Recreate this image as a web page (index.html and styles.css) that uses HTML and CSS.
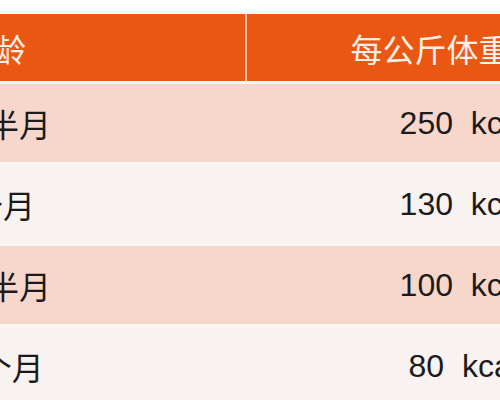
FILE: index.html
```html
<!DOCTYPE html>
<html lang="zh">
<head>
<meta charset="utf-8">
<title>热量表</title>
<link rel="stylesheet" href="styles.css">
</head>
<body>
<table class="kcal">
  <thead>
    <tr>
      <th class="age">月龄</th>
      <th class="need">每公斤体重所需热量</th>
    </tr>
  </thead>
  <tbody>
    <tr class="odd">
      <td class="age">1个半月</td>
      <td class="val">250&nbsp;&nbsp;kcal/kg</td>
    </tr>
    <tr class="even">
      <td class="age">3个月</td>
      <td class="val">130&nbsp;&nbsp;kcal/kg</td>
    </tr>
    <tr class="odd">
      <td class="age">4个半月</td>
      <td class="val">100&nbsp;&nbsp;kcal/kg</td>
    </tr>
    <tr class="even">
      <td class="age">12个月</td>
      <td class="val">80&nbsp;&nbsp;kcal/kg</td>
    </tr>
  </tbody>
</table>
</body>
</html>
```
FILE: styles.css
```css
html, body {
  margin: 0;
  padding: 0;
  overflow: hidden;
  background: #ffffff;
}

.kcal {
  margin-top: 11px;
  margin-left: -257px;
  border-collapse: separate;
  border-spacing: 0 3px;
  background: #fcf6f2;
  font-family: "Liberation Sans", "Noto Sans CJK SC", sans-serif;
  font-size: 32px;
  color: #1c1a1a;
  table-layout: fixed;
  width: 980px;
}

.kcal th,
.kcal td {
  padding: 0;
  text-align: center;
  font-weight: normal;
  white-space: nowrap;
}

.kcal th.age,
.kcal td.age {
  width: 502px;
  border-right: 2px solid transparent;
}

.kcal th {
  height: 67px;
  background: #ea5712;
  color: #fdf0e8;
}

.kcal th.age {
  border-right-color: #f6c0a0;
}

.kcal th.need {
  padding-left: 19px;
  text-align: center;
}

.kcal td {
  height: 78px;
}

.kcal tr.odd td {
  background: #f7d7cc;
}

.kcal tr.even td {
  background: #f8f2f0;
}

.kcal td.val {
  width: 474px;
}
```
